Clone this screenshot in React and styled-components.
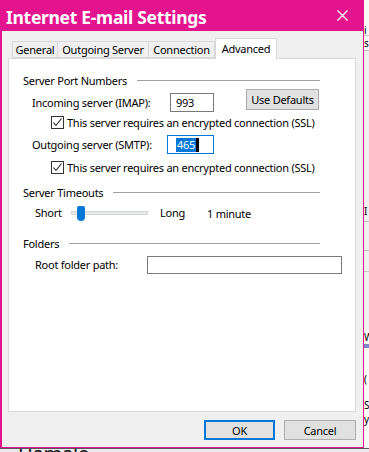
import React from 'react';
import styled, { createGlobalStyle } from 'styled-components';

const Global = createGlobalStyle`
  html, body {
    margin: 0;
    padding: 0;
    background: #f4f4f4;
  }
  body {
    font-family: "Noto Sans", "Open Sans", sans-serif;
    font-size: 11px;
    letter-spacing: -0.25px;
    color: #000;
  }
`;

const Screen = styled.div`
  width: 369px;
  height: 452px;
  overflow: hidden;
  display: grid;
  grid-template-columns: 364px 5px;
  grid-template-rows: 448px 4px;
  background: #f4f4f4;
`;

const Dialog = styled.div`
  display: flex;
  flex-direction: column;
  background: #f0f0f0;
  border: 1px solid #e3148e;
  border-left-width: 2px;
  border-top: none;
  box-sizing: border-box;
`;

const TitleBar = styled.div`
  height: 31px;
  flex: none;
  background: #e3148e;
  display: flex;
  align-items: center;
  justify-content: space-between;
  margin-left: -2px;
  margin-right: -1px;
  padding: 0 16px 0 6px;
`;

const Title = styled.div`
  color: #fff;
  font-weight: 700;
  font-size: 17.5px;
  letter-spacing: -0.3px;
  margin-top: 2px;
`;

const Body = styled.div`
  flex: 1;
  display: flex;
  flex-direction: column;
  padding: 7px 7px 0 6px;
`;

const Tabs = styled.div`
  display: flex;
  align-items: flex-end;
  height: 20px;
  padding-left: 4px;
  position: relative;
  z-index: 1;
`;

const Tab = styled.div`
  width: ${p => p.w}px;
  height: ${p => (p.active ? '21px' : '17px')};
  margin-bottom: ${p => (p.active ? '-1px' : '0')};
  box-sizing: border-box;
  border: 1px solid #d9d9d9;
  border-bottom: ${p => (p.active ? 'none' : '1px solid #d9d9d9')};
  border-left: ${p => (p.first || p.active ? '1px solid #d9d9d9' : 'none')};
  background: ${p => (p.active ? '#fff' : '#f0f0f0')};
  padding-top: ${p => (p.active ? '2px' : '0')};
  display: flex;
  justify-content: center;
  align-items: ${p => (p.active ? 'flex-start' : 'center')};
  white-space: nowrap;
`;

const Panel = styled.div`
  height: 354px;
  box-sizing: border-box;
  background: #fff;
  border: 1px solid #d9d9d9;
  padding: 14px 0 0 14px;
  display: flex;
  flex-direction: column;
`;

const GroupHead = styled.div`
  width: 297px;
  height: 14px;
  display: flex;
  align-items: center;
  gap: 10px;
  margin-top: ${p => p.top || 0}px;
  white-space: nowrap;

  &::after {
    content: '';
    flex: 1;
    height: 1px;
    background: #a0a0a0;
  }
`;

const FieldRow = styled.div`
  display: flex;
  align-items: flex-end;
  height: ${p => p.h || 19}px;
  margin-top: ${p => p.top || 0}px;
  padding-left: ${p => p.indent || 9}px;
`;

const Label = styled.div`
  width: ${p => p.w}px;
  flex: none;
  line-height: ${p => p.lh || 19}px;
  white-space: nowrap;
`;

const Input = styled.div`
  width: ${p => p.w}px;
  height: ${p => p.h || 19}px;
  box-sizing: border-box;
  border: 1px solid ${p => (p.focused ? '#0078d7' : '#7a7a7a')};
  background: #fff;
  display: flex;
  align-items: center;
  padding-left: ${p => p.pad || 5}px;
`;

const Selected = styled.span`
  background: #0078d7;
  color: #fff;
  line-height: 14px;
  padding: 0 1px;
`;

const Caret = styled.span`
  width: 3px;
  height: 14px;
  background: #000;
`;

const Button = styled.div`
  width: ${p => p.w || 73}px;
  height: ${p => p.h || 21}px;
  box-sizing: border-box;
  background: #e1e1e1;
  border: ${p => (p.default ? '2px solid #0078d7' : '1px solid #adadad')};
  display: flex;
  align-items: center;
  justify-content: center;
  white-space: nowrap;
`;

const DefaultsButton = styled(Button)`
  align-self: flex-start;
  margin-left: 32px;
  margin-bottom: 2px;
`;

const CheckRow = styled.div`
  display: flex;
  align-items: center;
  gap: 3px;
  height: 13px;
  margin-top: ${p => p.top || 0}px;
  padding-left: 28px;
  white-space: nowrap;
`;

const Box = styled.div`
  width: 13px;
  height: 13px;
  box-sizing: border-box;
  border: 1px solid #333;
  background: #fff;
  display: flex;
  align-items: center;
  justify-content: center;
`;

const SliderRow = styled.div`
  display: flex;
  align-items: center;
  height: 16px;
  margin-top: 6px;
  padding-left: 12px;
  white-space: nowrap;
`;

const Track = styled.div`
  width: 77px;
  height: 4px;
  box-sizing: border-box;
  background: #e7eaea;
  border: 1px solid #d6d6d6;
  margin-right: 12px;
  display: flex;
  align-items: center;
`;

const Thumb = styled.div`
  width: 8px;
  height: 15px;
  margin-left: 5px;
  background: #0078d7;
  border-radius: 2px 2px 4px 4px;
  flex: none;
`;

const Footer = styled.div`
  display: flex;
  justify-content: flex-end;
  gap: 9px;
  padding-top: 8px;
`;

const Strip = styled.div`
  background: #fafafa;
  display: flex;
  flex-direction: column;
  overflow: hidden;
  font-size: 10px;
`;

const StripCell = styled.div`
  height: ${p => p.h}px;
  flex: none;
  border-bottom: ${p => (p.line ? '1px solid #c8c8c8' : 'none')};
  background: ${p => p.bg || 'transparent'};
  line-height: ${p => p.h}px;
  white-space: nowrap;
`;

const Bottom = styled.div`
  grid-column: 1 / span 2;
  background: #ece9ee;
  border-top: 1px solid #555;
  overflow: hidden;
  font-size: 20px;
  line-height: 10px;
  padding-left: 18px;
  color: #111;
`;

const Check = () => (
  <svg width="11" height="11" viewBox="0 0 11 11">
    <path d="M1.5 5.5 L4 8.5 L9.5 1.5" fill="none" stroke="#222" strokeWidth="1.1" />
  </svg>
);

const Close = () => (
  <svg width="11" height="11" viewBox="0 0 11 11">
    <path d="M0.5 0.5 L10.5 10.5 M10.5 0.5 L0.5 10.5" stroke="#fff" strokeWidth="1.2" />
  </svg>
);

export default function App() {
  return (
    <>
      <Global />
      <Screen>
        <Dialog>
          <TitleBar>
            <Title>Internet E-mail Settings</Title>
            <Close />
          </TitleBar>
          <Body>
            <Tabs>
              <Tab first w={46}>General</Tab>
              <Tab w={91}>Outgoing Server</Tab>
              <Tab w={66}>Connection</Tab>
              <Tab active w={62}>Advanced</Tab>
            </Tabs>
            <Panel>
              <GroupHead>Server Port Numbers</GroupHead>
              <FieldRow h={23} top={2}>
                <Label w={138}>Incoming server (IMAP):</Label>
                <Input w={44}>993</Input>
                <DefaultsButton>Use Defaults</DefaultsButton>
              </FieldRow>
              <CheckRow top={4}>
                <Box><Check /></Box>
                This server requires an encrypted connection (SSL)
              </CheckRow>
              <FieldRow top={6}>
                <Label w={135}>Outgoing server (SMTP):</Label>
                <Input w={47} focused pad={8}>
                  <Selected>465</Selected>
                  <Caret />
                </Input>
              </FieldRow>
              <CheckRow top={7}>
                <Box><Check /></Box>
                This server requires an encrypted connection (SSL)
              </CheckRow>
              <GroupHead top={11}>Server Timeouts</GroupHead>
              <SliderRow>
                <Label w={36} lh={16}>Short</Label>
                <Track><Thumb /></Track>
                <Label w={47} lh={16}>Long</Label>
                1 minute
              </SliderRow>
              <GroupHead top={15}>Folders</GroupHead>
              <FieldRow top={6} indent={12} h={18}>
                <Label w={112} lh={18}>Root folder path:</Label>
                <Input w={195} h={18} />
              </FieldRow>
            </Panel>
            <Footer>
              <Button default h={20} w={71}>OK</Button>
              <Button h={20} w={72}>Cancel</Button>
            </Footer>
          </Body>
        </Dialog>
        <Strip>
          <StripCell h={26} />
          <StripCell h={9} line>i</StripCell>
          <StripCell h={14} line>s</StripCell>
          <StripCell h={150} bg="#f0f0f0" />
          <StripCell h={20} line bg="#f0f0f0">I</StripCell>
          <StripCell h={28} line bg="#f0f0f0" />
          <StripCell h={20} line bg="#f0f0f0" />
          <StripCell h={58} bg="#f0f0f0" />
          <StripCell h={14}>W</StripCell>
          <StripCell h={4} bg="#7d88c8" />
          <StripCell h={24} />
          <StripCell h={14}>(</StripCell>
          <StripCell h={12} />
          <StripCell h={14}>S</StripCell>
          <StripCell h={14}>y</StripCell>
        </Strip>
        <Bottom>Hamalo</Bottom>
      </Screen>
    </>
  );
}
